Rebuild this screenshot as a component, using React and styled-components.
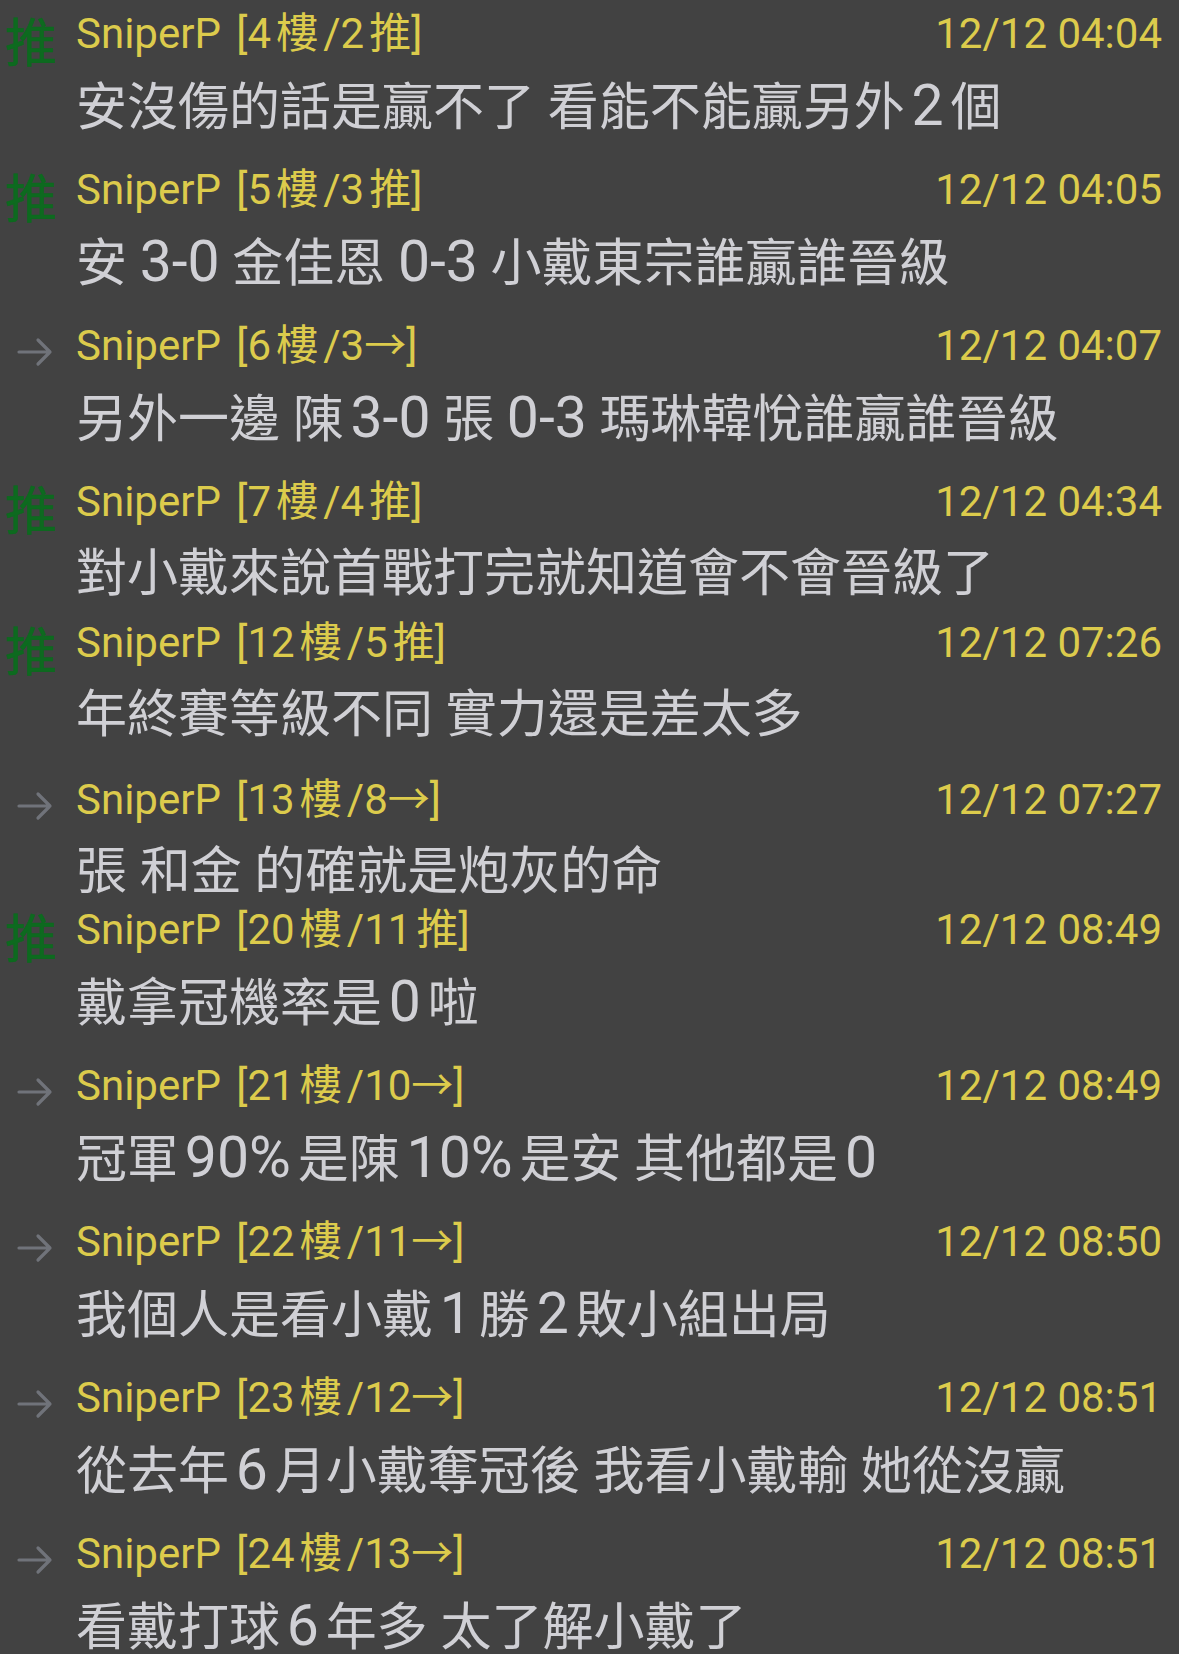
import React from 'react';
import styled, { createGlobalStyle } from 'styled-components';

const GlobalStyle = createGlobalStyle`
  html, body {
    margin: 0;
    padding: 0;
    background: #424242;
  }
`;

const Page = styled.div`
  min-height: 1654px;
  box-sizing: border-box;
  padding: 11px 17px 0 5px;
  background: #424242;
  font-family: Roboto, "Noto Sans CJK TC", "Noto Sans", sans-serif;
  overflow: hidden;
`;

const Row = styled.div`
  display: grid;
  grid-template-columns: 71px 1fr;
  grid-template-rows: 46px 60px;
  row-gap: 19px;
  margin-bottom: ${props => props.$gap}px;
`;

const TagCell = styled.div`
  grid-row: 1;
  grid-column: 1;
  align-self: start;
`;

const PushTag = styled.span`
  display: block;
  margin-top: 6px;
  font-family: "Noto Sans CJK TC", sans-serif;
  font-size: 52px;
  line-height: 46px;
  color: #0d6a1f;
  -webkit-text-stroke: 0.6px #0d6a1f;
`;

const ArrowTag = styled.svg`
  display: block;
  margin: 13px 0 0 12px;
`;

const Latin = styled.span`
  margin-left: ${props => (props.$l ? '0.12em' : '0')};
  margin-right: ${props => (props.$r ? '0.12em' : '0')};
`;

const Header = styled.div`
  grid-row: 1;
  grid-column: 2;
  display: flex;
  justify-content: space-between;
  align-items: center;
  font-size: 42px;
  line-height: 46px;
  color: #dccb4c;
  white-space: nowrap;
`;

const Author = styled.span`
  word-spacing: 5px;
`;

const Body = styled.div`
  grid-row: 2;
  grid-column: 2;
  font-size: 51px;
  line-height: 60px;
  color: #d0d0d5;
  white-space: nowrap;

  ${Latin} {
    font-size: 1.12em;
  }
`;

const isCjk = ch => !!ch && /[\u3400-\u9fff\uf900-\ufaff]/.test(ch);

// mimic the app's spacing between CJK and latin runs
const spaced = text => {
  const parts = text.split(/([0-9A-Za-z%/\-]+)/).filter(Boolean);
  return parts.map((part, i) => {
    if (!/^[0-9A-Za-z%/\-]+$/.test(part)) return part;
    const prev = parts[i - 1];
    const next = parts[i + 1];
    return (
      <Latin key={i} $l={isCjk(prev && prev[prev.length - 1])} $r={isCjk(next && next[0])}>
        {part}
      </Latin>
    );
  });
};

const Arrow = () => (
  <ArrowTag width="36" height="32" viewBox="0 0 36 32">
    <path
      d="M2 16 H33 M21 4 L33 16 L21 28"
      fill="none"
      stroke="#70737a"
      strokeWidth="3.2"
      strokeLinecap="round"
      strokeLinejoin="round"
    />
  </ArrowTag>
);

const comments = [
  { push: true, floor: 4, count: '2推', time: '12/12 04:04', text: '安沒傷的話是贏不了 看能不能贏另外2個', gap: 31 },
  { push: true, floor: 5, count: '3推', time: '12/12 04:05', text: '安 3-0 金佳恩 0-3 小戴東宗誰贏誰晉級', gap: 31 },
  { push: false, floor: 6, count: '3→', time: '12/12 04:07', text: '另外一邊 陳3-0 張 0-3 瑪琳韓悅誰贏誰晉級', gap: 31 },
  { push: true, floor: 7, count: '4推', time: '12/12 04:34', text: '對小戴來說首戰打完就知道會不會晉級了', gap: 16 },
  { push: true, floor: 12, count: '5推', time: '12/12 07:26', text: '年終賽等級不同 實力還是差太多', gap: 32 },
  { push: false, floor: 13, count: '8→', time: '12/12 07:27', text: '張 和金 的確就是炮灰的命', gap: 5 },
  { push: true, floor: 20, count: '11推', time: '12/12 08:49', text: '戴拿冠機率是0啦', gap: 31 },
  { push: false, floor: 21, count: '10→', time: '12/12 08:49', text: '冠軍90%是陳10%是安 其他都是0', gap: 31 },
  { push: false, floor: 22, count: '11→', time: '12/12 08:50', text: '我個人是看小戴1勝2敗小組出局', gap: 31 },
  { push: false, floor: 23, count: '12→', time: '12/12 08:51', text: '從去年6月小戴奪冠後 我看小戴輸 她從沒贏', gap: 31 },
  { push: false, floor: 24, count: '13→', time: '12/12 08:51', text: '看戴打球6年多 太了解小戴了', gap: 0 },
];

const App = () => (
  <Page>
    <GlobalStyle />
    {comments.map(c => (
      <Row key={c.floor} $gap={c.gap}>
        <TagCell>{c.push ? <PushTag>推</PushTag> : <Arrow />}</TagCell>
        <Header>
          <Author>{spaced(`SniperP [${c.floor}樓/${c.count}]`)}</Author>
          <span>{c.time}</span>
        </Header>
        <Body>{spaced(c.text)}</Body>
      </Row>
    ))}
  </Page>
);

export default App;
